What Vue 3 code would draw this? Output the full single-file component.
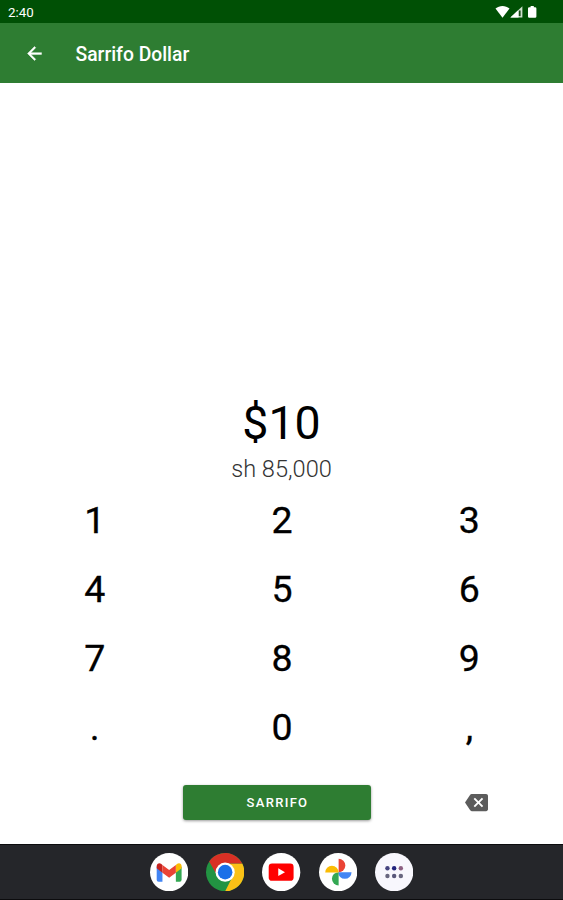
<script setup>
import { ref } from "vue"

const title = "Sarrifo Dollar";
const amount = ref("10");
const converted = ref("85,000");
const keys = ["1", "2", "3", "4", "5", "6", "7", "8", "9", ".", "0", ","];

const onKey = (key) => {
  amount.value += key;
};

const onDelete = () => {
  amount.value = amount.value.slice(0, -1);
};
</script>

<template>
  <div class="screen">
    <div class="status-bar">
      <span class="time">2:40</span>
      <svg class="status-icons" width="44" height="14" viewBox="0 0 44 14">
        <path fill="#fff" d="M0.5 3.6C4.6 0.2 10.4 0.2 14.5 3.6L7.5 12.8Z" />
        <path fill="#cfe0cf" d="M15.4 12.6L27.4 1.2V12.6Z" />
        <path fill="#fff" d="M15.4 12.6L23.5 4.9V12.6Z" />
        <path fill="#174d17" d="M23.8 5.5h1.8v5.6h-1.8z" />
        <path fill="#fff" d="M35.6 1h3.2v1.3h1.3q1.3 0 1.3 1.3v7.8q0 1.3-1.3 1.3h-5.8q-1.3 0-1.3-1.3V3.6q0-1.3 1.3-1.3h1.3z" />
      </svg>
    </div>

    <div class="app-bar">
      <svg class="back" width="24" height="24" viewBox="0 0 24 24">
        <path fill="#fff" stroke="#fff" stroke-width="0.5" d="M20 11H7.83l5.59-5.59L12 4l-8 8 8 8 1.41-1.41L7.83 13H20v-2z" />
      </svg>
      <h1 class="title">{{ title }}</h1>
    </div>

    <div class="content">
      <div class="amount">${{ amount }}</div>
      <div class="converted">sh {{ converted }}</div>

      <div class="keypad">
        <button v-for="key in keys" :key="key" class="key" @click="onKey(key)">{{ key }}</button>
      </div>

      <div class="actions">
        <button class="submit">SARRIFO</button>
        <button class="delete" @click="onDelete">
          <svg width="23" height="23" viewBox="0 0 24 24">
            <path fill="#5c5c5c" d="M22 3H7c-.69 0-1.23.35-1.59.88L0 12l5.41 8.11c.36.53.9.89 1.59.89h15c1.1 0 2-.9 2-2V5c0-1.1-.9-2-2-2zm-3 12.59L17.59 17 14 13.41 10.41 17 9 15.59 12.59 12 9 8.41 10.41 7 14 10.59 17.59 7 19 8.41 15.41 12 19 15.59z" />
          </svg>
        </button>
      </div>
    </div>

    <div class="dock">
      <!-- Gmail -->
      <svg class="app" viewBox="0 0 40 40">
        <circle cx="20" cy="20" r="20" fill="#fff" />
        <path fill="#4285f4" d="M7 14l6 4.5V30H9q-2 0-2-2z" />
        <path fill="#34a853" d="M27 18.5l6-4.5v14q0 2-2 2h-4z" />
        <path fill="#fbbc04" d="M27 12.5l1.5-1.2c2-1.5 4.5 0 4.5 2.4V16l-6 4.5z" />
        <path fill="#c5221f" d="M7 16v-2.3c0-2.4 2.5-3.9 4.5-2.4l1.5 1.2v8z" />
        <path fill="#ea4335" d="M13 12.5l7 5.3 7-5.3v8l-7 5.3-7-5.3z" />
      </svg>
      <!-- Chrome -->
      <svg class="app" viewBox="0 0 40 40">
        <circle cx="20" cy="20" r="20" fill="#229342" />
        <path fill="#fbc116" d="M20 11H37.86A20 20 0 0 1 20 40L27.8 24.5Z" />
        <path fill="#d93025" d="M20 11H37.86A20 20 0 0 0 3.34 8.94L12.2 24.5Z" />
        <circle cx="20" cy="20" r="10" fill="#fff" />
        <circle cx="20" cy="20" r="7.6" fill="#1a6fe8" />
      </svg>
      <!-- YouTube -->
      <svg class="app" viewBox="0 0 40 40">
        <circle cx="20" cy="20" r="20" fill="#fff" />
        <rect x="7" y="11" width="26" height="18" rx="3.5" fill="#f00" />
        <path fill="#fff" d="M17 16l7 4-7 4z" />
      </svg>
      <!-- Photos -->
      <svg class="app" viewBox="0 0 40 40">
        <circle cx="20" cy="20" r="20" fill="#fff" />
        <path fill="#ea4335" d="M20.5 6a7 7 0 0 1 0 14z" />
        <path fill="#4285f4" d="M34 20a7 7 0 0 1-14 0z" />
        <path fill="#34a853" d="M20.5 34a7 7 0 0 1 0-14z" />
        <path fill="#fbbc04" d="M6.5 20.3a7 7 0 0 1 14 0z" />
      </svg>
      <!-- All apps -->
      <svg class="app" viewBox="0 0 40 40">
        <circle cx="20" cy="20" r="20" fill="#f8f7fd" />
        <circle cx="13" cy="16" r="2.3" fill="#45437f" />
        <circle cx="20" cy="16" r="2.3" fill="#22237d" />
        <circle cx="27" cy="16" r="2.3" fill="#8c5f82" />
        <circle cx="13" cy="24" r="2.3" fill="#68667f" />
        <circle cx="20" cy="24" r="2.3" fill="#59577a" />
        <circle cx="27" cy="24" r="2.3" fill="#68667f" />
      </svg>
    </div>
  </div>
</template>

<style>
body {
  margin: 0;
}
</style>

<style scoped>
.screen {
  height: 900px;
  display: flex;
  flex-direction: column;
  background: #fff;
  font-family: Roboto, "Liberation Sans", sans-serif;
  overflow: hidden;
}

.status-bar {
  height: 23px;
  box-sizing: border-box;
  padding: 1px 24px 0 8px;
  display: flex;
  align-items: center;
  justify-content: space-between;
  background: #005005;
}

.time {
  color: #fff;
  font-size: 13.3px;
  line-height: 20px;
  padding-top: 1px;
}

.app-bar {
  height: 60px;
  box-sizing: border-box;
  padding: 0 0 0 24px;
  display: flex;
  align-items: center;
  background: #2e7d32;
}

.back {
  width: 21px;
  height: 21px;
}

.title {
  margin: 2px 0 0 30.5px;
  color: #fff;
  font-size: 19.3px;
  font-weight: 500;
}

.content {
  flex: 1;
  display: flex;
  flex-direction: column;
  justify-content: flex-end;
}

.amount {
  text-align: center;
  font-size: 46.5px;
  line-height: 60px;
  color: #000;
}

.converted {
  text-align: center;
  font-size: 23.6px;
  font-weight: 300;
  line-height: 32px;
  color: #333;
}

.keypad {
  padding-left: 1px;
  display: grid;
  grid-template-columns: repeat(3, 1fr);
  grid-auto-rows: 69px;
}

button {
  padding: 0;
  border: none;
  background: none;
  font-family: inherit;
}

.key {
  font-size: 37.5px;
  font-weight: 400;
  color: #000;
  -webkit-text-stroke: 0.3px #000;
}

.actions {
  height: 83px;
  box-sizing: border-box;
  padding: 0 0 1px 183px;
  display: flex;
  align-items: center;
}

.submit {
  width: 188px;
  height: 35px;
  padding-left: 1px;
  border-radius: 3px;
  background: #2e7d32;
  box-shadow: 0 1px 3px rgba(0, 0, 0, 0.4);
  color: #fff;
  font-size: 13px;
  font-weight: 500;
  letter-spacing: 1.3px;
}

.delete {
  display: flex;
  margin-left: 94px;
}

/* ランチャー */
.dock {
  height: 56px;
  box-sizing: border-box;
  border-top: 1px solid #0c0c0e;
  border-bottom: 1px solid #0c0c0e;
  display: flex;
  align-items: center;
  justify-content: center;
  gap: 18px;
  background: #25262a;
}

.app {
  width: 38.3px;
  height: 38.3px;
}
</style>
